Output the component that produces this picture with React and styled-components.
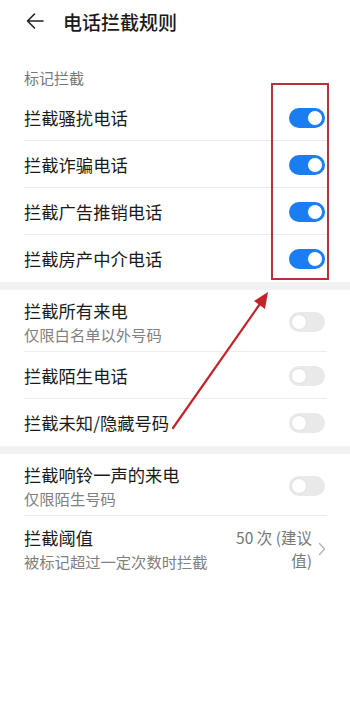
import React from 'react';
import styled, { createGlobalStyle } from 'styled-components';

const GlobalStyle = createGlobalStyle`
  html, body {
    margin: 0;
    padding: 0;
    background: #ffffff;
  }
  body {
    font-family: 'Noto Sans CJK SC', 'Noto Sans', sans-serif;
    color: #1a1a1a;
  }
`;

const Page = styled.div`
  position: relative;
  width: 350px;
  min-height: 709px;
  background: #fff;
`;

const Header = styled.div`
  display: flex;
  align-items: center;
  height: 42px;
  padding-left: 26px;
`;

const BackButton = styled.div`
  display: flex;
  width: 18px;
  height: 18px;
  margin-right: 19px;
  color: #222;
`;

const Title = styled.div`
  font-size: 19px;
  font-weight: 500;
  color: #1a1a1a;
`;

const SectionLabel = styled.div`
  padding: 26px 24px 6px;
  font-size: 15px;
  line-height: 20px;
  color: #777;
`;

const Group = styled.div`
  background: #fff;
`;

const Band = styled.div`
  height: 8px;
  background: #f2f2f2;
`;

const Row = styled.div`
  display: flex;
  align-items: center;
  justify-content: space-between;
  min-height: ${(p) => (p.tall ? '62px' : '47px')};
  box-sizing: border-box;
  padding: ${(p) => (p.tall ? '10px 25px 8px 24px' : '0 25px 0 24px')};
  position: relative;
  &:not(:last-child)::after {
    content: '';
    position: absolute;
    left: 24px;
    right: 23px;
    bottom: 0;
    height: 1px;
    background: #ececec;
  }
`;

const TextCol = styled.div`
  display: flex;
  flex-direction: column;
  gap: 2px;
`;

const RowTitle = styled.div`
  font-size: 17.3px;
  line-height: 22px;
  color: #1a1a1a;
`;

const RowSub = styled.div`
  font-size: 15.3px;
  line-height: 20px;
  color: #808080;
`;

const Toggle = styled.div`
  position: relative;
  width: 36px;
  height: 20px;
  border-radius: 10px;
  background: ${(p) => (p.on ? '#1a7ef2' : '#e9e9e9')};
  flex-shrink: 0;
  &::after {
    content: '';
    position: absolute;
    top: 2px;
    ${(p) => (p.on ? 'right: 2px;' : 'left: 2px;')}
    width: 16px;
    height: 16px;
    border-radius: 50%;
    background: #fff;
    box-sizing: border-box;
    border: 1px solid ${(p) => (p.on ? '#1a7ef2' : '#e2e2e2')};
  }
`;

const ValueWrap = styled.div`
  display: flex;
  align-items: center;
  gap: 6px;
  margin-right: -1px;
`;

const Value = styled.div`
  width: 82px;
  text-align: right;
  font-size: 15.5px;
  line-height: 23px;
  color: #777;
`;

const Chevron = styled.div`
  display: flex;
  width: 8px;
  height: 14px;
  color: #b5b5b5;
`;

const RedBox = styled.div`
  position: absolute;
  left: 271px;
  top: 83px;
  width: 58px;
  height: 197px;
  box-sizing: border-box;
  border: 2px solid #b2343a;
  pointer-events: none;
`;

const ArrowLayer = styled.svg`
  position: absolute;
  left: 0;
  top: 0;
  pointer-events: none;
`;

const ToggleRow = ({ title, sub, on }) => (
  <Row tall={!!sub}>
    <TextCol>
      <RowTitle>{title}</RowTitle>
      {sub && <RowSub>{sub}</RowSub>}
    </TextCol>
    <Toggle on={on} />
  </Row>
);

const App = () => {
  return (
    <>
      <GlobalStyle />
      <Page>
        <Header>
          <BackButton>
            <svg width="18" height="18" viewBox="0 0 18 18" fill="none" stroke="currentColor" strokeWidth="1.6" strokeLinecap="round" strokeLinejoin="round">
              <path d="M17 9H1.5M8.5 2L1.5 9l7 7" />
            </svg>
          </BackButton>
          <Title>电话拦截规则</Title>
        </Header>

        <SectionLabel>标记拦截</SectionLabel>
        <Group>
          <ToggleRow title="拦截骚扰电话" on />
          <ToggleRow title="拦截诈骗电话" on />
          <ToggleRow title="拦截广告推销电话" on />
          <ToggleRow title="拦截房产中介电话" on />
        </Group>
        <Band />
        <Group>
          <ToggleRow title="拦截所有来电" sub="仅限白名单以外号码" />
          <ToggleRow title="拦截陌生电话" />
          <ToggleRow title="拦截未知/隐藏号码" />
        </Group>
        <Band />
        <Group>
          <ToggleRow title="拦截响铃一声的来电" sub="仅限陌生号码" />
          <Row tall>
            <TextCol>
              <RowTitle>拦截阈值</RowTitle>
              <RowSub>被标记超过一定次数时拦截</RowSub>
            </TextCol>
            <ValueWrap>
              <Value>50 次 (建议值)</Value>
              <Chevron>
                <svg width="8" height="14" viewBox="0 0 8 14" fill="none" stroke="currentColor" strokeWidth="1.3" strokeLinecap="round" strokeLinejoin="round">
                  <path d="M1.5 1.5L6.5 7l-5 5.5" />
                </svg>
              </Chevron>
            </ValueWrap>
          </Row>
        </Group>

        <RedBox />
        <ArrowLayer width="350" height="709" viewBox="0 0 350 709">
          <path d="M173 428 L262 301" stroke="#c3242a" strokeWidth="2.2" strokeLinecap="round" />
          <path d="M268 292 L254 301 L265 309 Z" fill="#c3242a" />
        </ArrowLayer>
      </Page>
    </>
  );
};

export default App;
